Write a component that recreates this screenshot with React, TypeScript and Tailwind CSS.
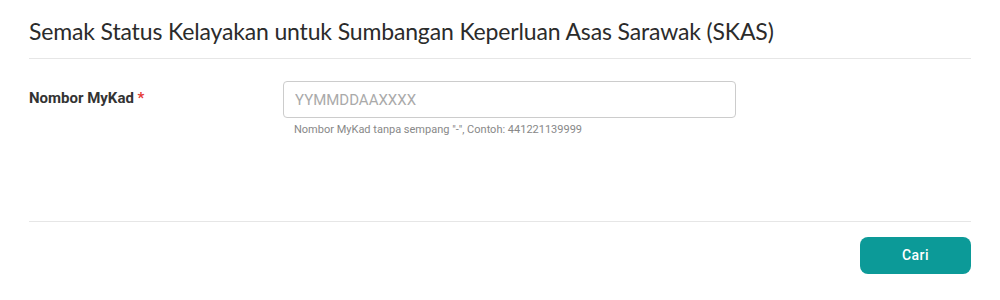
export default function App() {
  return (
    <div className="w-[1000px] h-[300px] bg-white px-[29px]">
      <div className="pt-[19px] pb-[15px] border-b border-[#e6e6e6]">
        <h1 className="text-[23px] leading-[24px] text-[#2b2b2b] tracking-[-0.15px] font-['Lato',sans-serif]">
          Semak Status Kelayakan untuk Sumbangan Keperluan Asas Sarawak (SKAS)
        </h1>
      </div>
      <div className="flex h-[163px] border-b border-[#e6e6e6] pt-[22px] font-['Roboto',sans-serif]">
        <div className="w-[254px] pt-[5px]">
          <label className="text-[15px] font-bold text-[#333]">
            Nombor MyKad <span className="text-[#e53935]">*</span>
          </label>
        </div>
        <div className="flex flex-col">
          <input
            className="w-[453px] h-[37px] border border-[#ccc] rounded-[4px] px-[11px] text-[15px] text-[#333] placeholder:text-[#aaa] outline-none"
            placeholder="YYMMDDAAXXXX"
          />
          <div className="mt-[4px] pl-[11px] text-[11px] text-[#888]">
            Nombor MyKad tanpa sempang "-", Contoh: 441221139999
          </div>
        </div>
      </div>
      <div className="flex justify-end pt-[15px]">
        <button className="w-[111px] h-[37px] rounded-[8px] bg-[#0c9a98] text-white text-[14px] font-medium tracking-[0.5px] font-['Roboto',sans-serif]">
          Cari
        </button>
      </div>
    </div>
  );
}
